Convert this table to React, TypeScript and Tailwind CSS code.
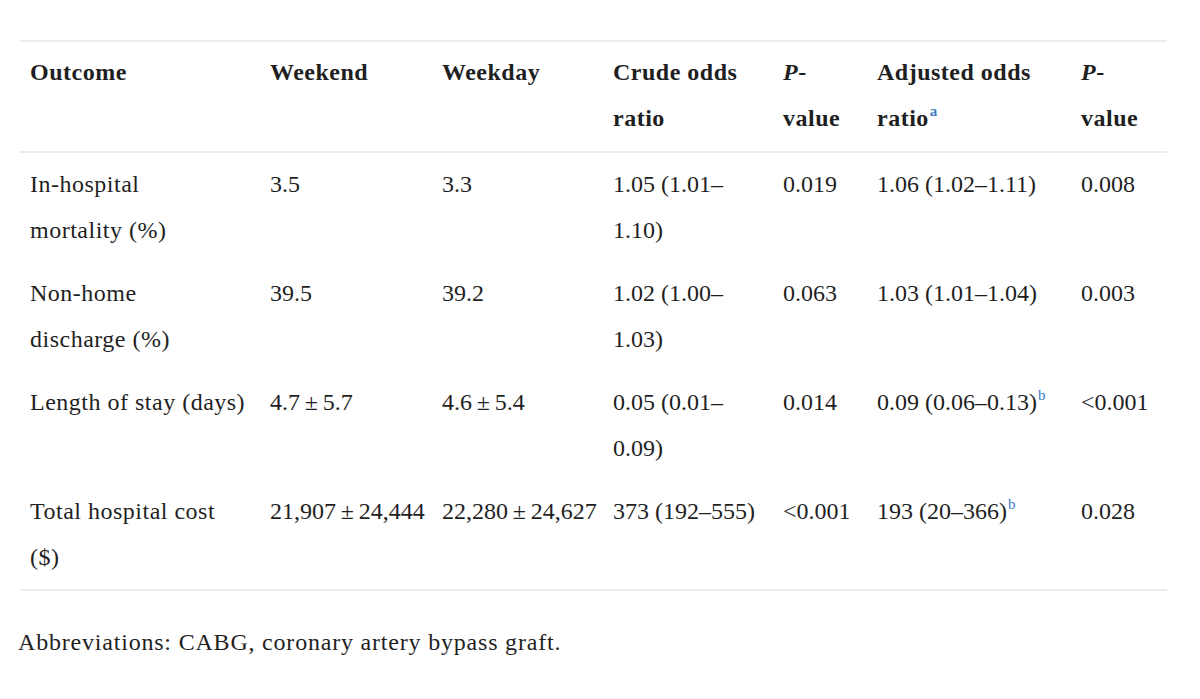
const T = "\u2009";

function Sup({ c, bold = false }: { c: string; bold?: boolean }) {
  return (
    <span className={`relative -top-[10px] ml-[1px] text-[15px] leading-none text-[#3a7cc1] ${bold ? "font-bold" : "font-normal"}`}>
      {c}
    </span>
  );
}

const head: React.ReactNode[] = [
  <>Outcome</>,
  <>Weekend</>,
  <>Weekday</>,
  <>Crude odds<br />ratio</>,
  <><i>P</i>-<br />value</>,
  <>Adjusted odds<br />ratio<Sup c="a" bold /></>,
  <><i>P</i>-<br />value</>,
];

const rows: React.ReactNode[][] = [
  [<>In-hospital<br />mortality (%)</>, "3.5", "3.3", <>1.05 (1.01–<br />1.10)</>, "0.019", "1.06 (1.02–1.11)", "0.008"],
  [<>Non-home<br />discharge (%)</>, "39.5", "39.2", <>1.02 (1.00–<br />1.03)</>, "0.063", "1.03 (1.01–1.04)", "0.003"],
  ["Length of stay (days)", `4.7${T}±${T}5.7`, `4.6${T}±${T}5.4`, <>0.05 (0.01–<br />0.09)</>, "0.014", <>0.09 (0.06–0.13)<Sup c="b" /></>, "<0.001"],
  [<>Total hospital cost<br />($)</>, `21,907${T}±${T}24,444`, `22,280${T}±${T}24,627`, "373 (192–555)", "<0.001", <>193 (20–366)<Sup c="b" /></>, "0.028"],
];

const widths = ["w-[240px]", "w-[172px]", "w-[171px]", "w-[170px]", "w-[94px]", "w-[204px]", "w-[96px]"];

export default function App() {
  return (
    <div className="w-[1200px] h-[699px] bg-white text-[#1f1f1f] font-['Liberation_Serif',serif] text-[24px] leading-[46px] tracking-[0.5px] overflow-hidden">
      <div className="pt-[40px] pl-[20px]">
        <table className="table-fixed border-collapse w-[1147px]">
          <colgroup>
            {widths.map((w, i) => (
              <col key={i} className={w} />
            ))}
          </colgroup>
          <thead>
            <tr className="border-t-2 border-b-2 border-[#ececec]">
              {head.map((h, i) => (
                <th key={i} className="text-left font-bold align-top whitespace-nowrap pl-[10px] pt-[7px] pb-[10px]">
                  {h}
                </th>
              ))}
            </tr>
          </thead>
          <tbody>
            {rows.map((r, ri) => (
              <tr key={ri} className={ri === rows.length - 1 ? "border-b-2 border-[#ececec]" : ""}>
                {r.map((c, ci) => (
                  <td
                    key={ci}
                    className={`align-top whitespace-nowrap pl-[10px] pt-[8px] pb-[9px] ${ci > 0 ? "tracking-normal" : ""}`}
                  >
                    {c}
                  </td>
                ))}
              </tr>
            ))}
          </tbody>
        </table>
        <p className="mt-[28px] -ml-[2px] tracking-[0.8px]">Abbreviations: CABG, coronary artery bypass graft.</p>
      </div>
    </div>
  );
}
